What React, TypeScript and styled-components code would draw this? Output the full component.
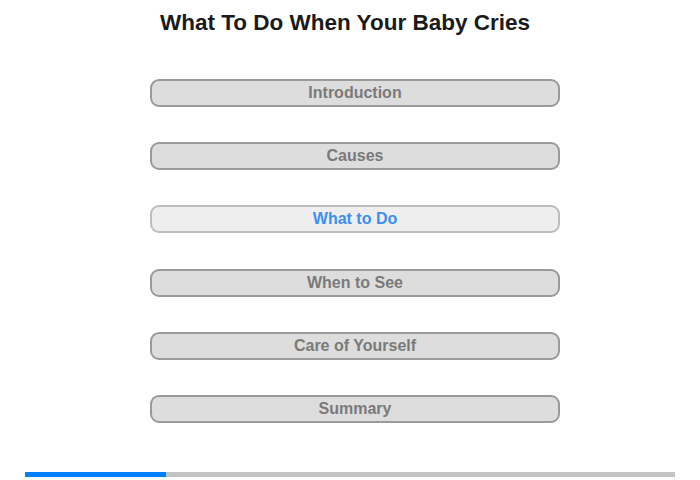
import styled, { createGlobalStyle } from "styled-components";

const GlobalStyle = createGlobalStyle`
body {
    margin:0;
    background:#fff;
    font-family:"Liberation Sans", Arial, sans-serif;
}
`

const sections = [
    "Introduction",
    "Causes",
    "What to Do",
    "When to See",
    "Care of Yourself",
    "Summary"
]

const App = () => {
    const current = 2
    const progress = 141 / 650

    return(
        <Page>
            <GlobalStyle/>
            <Title>What To Do When Your Baby Cries</Title>
            <Menu>
                {sections.map((name, i) => (
                    <MenuButton key={name} $active={i === current}>{name}</MenuButton>
                ))}
            </Menu>
            <Progress>
                <ProgressFill style={{width: `${progress * 100}%`}}/>
            </Progress>
        </Page>
    )
}

const Page = styled.div`
width:700px;
height:480px;
position:relative;
box-sizing:border-box;
padding-top:11px;
`
const Title = styled.h1`
margin:0;
padding-right:10px;
font-size:22.5px;
font-weight:700;
line-height:24px;
color:#1a1a1a;
text-align:center;
`
const Menu = styled.div`
display:flex;
flex-direction:column;
gap:35.2px;
margin-top:44px;
margin-left:150px;
width:410px;
`
const MenuButton = styled.div<{ $active?: boolean }>`
box-sizing:border-box;
height:28px;
border:2px solid ${p => p.$active ? '#bdbdbd' : '#9a9a9a'};
background:${p => p.$active ? '#eeeeee' : '#dddddd'};
border-radius:9px;
display:flex;
align-items:center;
justify-content:center;
font-size:16px;
font-weight:700;
color:${p => p.$active ? '#3b8ff5' : '#7a7a7a'};
`
const Progress = styled.div`
position:absolute;
left:25px;
top:472px;
width:650px;
height:5px;
background:#c4c4c4;
`
const ProgressFill = styled.div`
height:100%;
background:#0080ff;
`
export default App;
